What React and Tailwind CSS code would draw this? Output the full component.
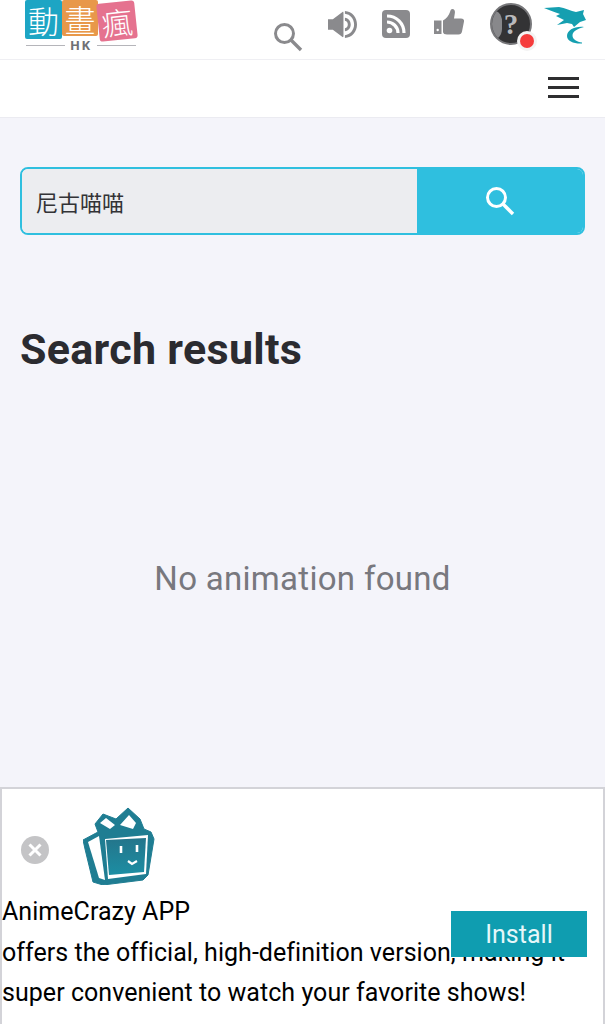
import React from 'react';

const Logo = () => (
  <div className="flex flex-col w-[112px] ml-[25px] h-[54px]">
    <div className="flex h-[39px] text-white leading-none" style={{ fontFamily: '"Noto Sans CJK TC", sans-serif' }}>
      <div className="w-[37px] h-[39px] bg-[#1da5c4] rounded-[2px] flex items-center justify-center text-[31px] font-light">動</div>
      <div className="w-[36px] h-[36px] bg-[#e8984a] rounded-[2px] flex items-center justify-center text-[31px] font-light">畫</div>
      <div className="w-[38px] h-[38px] mt-[2px] bg-[#e5728f] rounded-[3px] flex items-center justify-center text-[31px] font-light -rotate-6">瘋</div>
    </div>
    <div className="flex items-center gap-[5px] mt-[-1px] ml-[1px]">
      <div className="h-[1px] w-[39px] bg-[#b5b5ba]" />
      <span className="text-[13px] leading-[15px] font-bold tracking-[1.500px] text-[#6f7075]" style={{ fontFamily: '"Open Sans", sans-serif' }}>HK</span>
      <div className="h-[1px] w-[39px] bg-[#b5b5ba]" />
    </div>
  </div>
);

const SearchIcon = ({ className, color }) => (
  <svg viewBox="0 0 30 30" className={className} fill="none" stroke={color} strokeWidth="3">
    <circle cx="11.500" cy="11.500" r="9" />
    <path d="M18 18 L28 28" strokeWidth="3.400" />
  </svg>
);

const Speaker = () => (
  <svg viewBox="0 0 32 30" className="w-[31px] h-[29px]" fill="#8a8a8d">
    <path d="M1 9.500h5L16 2c.8-.4 1 .2 1 1v24c0 .8-.3 1.300-1 1L6 20.500H1z" />
    <path d="M18.500 1C26 1.500 31 7.500 31 15s-5 13.500-12.500 14v-3c5.500-.5 9.500-5.500 9.500-11S24 4.500 18.500 4z" />
    <path d="M18.500 8c3.800.5 6 3.500 6 7s-2.200 6.500-6 7v-3c2-.4 3-2 3-4s-1-3.600-3-4z" />
  </svg>
);

const Rss = () => (
  <svg viewBox="0 0 28 28" className="w-[28px] h-[28px]">
    <rect width="28" height="28" rx="4" fill="#8a8a8d" />
    <circle cx="7.500" cy="20.500" r="2.800" fill="#fff" />
    <path d="M5 12c6 0 11 5 11 11M5 6c9.500 0 17 7.500 17 17" fill="none" stroke="#fff" strokeWidth="3.200" />
  </svg>
);

const Thumb = () => (
  <svg viewBox="0 0 30 28" className="w-[30px] h-[28px]" fill="#8a8a8d">
    <path d="M0 11.500h7.500V25H0z" />
    <circle cx="3.700" cy="21" r="1.200" fill="#fff" />
    <path d="M9 11.500c3-1.500 6-5 7-8.500.5-2 1-3 2.500-3 2 0 2.800 2 2.300 4.500L20 9.500h7c2.500 0 3.300 1.500 3 3l-2 10c-.4 2-1.500 3-3.500 3H13c-2 0-4-.8-4-2.500z" />
  </svg>
);

const Avatar = () => (
  <div className="relative w-[42px] h-[42px]">
    <div className="w-[42px] h-[42px] rounded-full bg-[#333335] border-2 border-[#77777a] flex items-center justify-center overflow-hidden relative">
      <div className="absolute left-[-2px] top-[4px] w-[12px] h-[32px] bg-[#88888b] rounded-r-[12px]" />
      <span className="relative text-[#b9b9bc] font-bold text-[29px] leading-none" style={{ fontFamily: '"Liberation Serif", serif' }}>?</span>
    </div>
    <div className="absolute left-[27px] top-[28px] w-[20px] h-[20px] rounded-full bg-[#f3f3f3] flex items-center justify-center">
      <div className="w-[14px] h-[14px] rounded-full bg-[#f53c3c]" />
    </div>
  </div>
);

const Dragon = () => (
  <svg viewBox="0 0 42 37" className="w-[42px] h-[37px]" fill="#159fb0">
    <path d="M0 1 L15 0 C21 1 27 4 32 5 L40 3 L39 7 L42 13 L36 15 L30 20 L28 17 L23 16 L13 18 L20 13 L12 9 L16 7 C10 5 5 3 0 1z" />
    <path d="M40 20 C31 19 23 23 23 29 C23 34 30 37 38 36.500 L38 35.500 C33 35 28.500 32.500 28.500 28.500 C28.500 24.500 33 22 40 20z" />
  </svg>
);

const Gift = () => (
  <svg viewBox="0 0 72 78" className="w-[72px] h-[78px]">
    <defs>
      <linearGradient id="giftScreen" x1="0" y1="0" x2="0" y2="1">
        <stop offset="0" stopColor="#24758b" />
        <stop offset="1" stopColor="#1c8ea3" />
      </linearGradient>
    </defs>
    <path d="M0 33 L15 25 L12 17 L20 7 L33 12 L45 1 L57 12 L61 22 L68 25 L71 32 L65 68 L60 73 L20 78 L10 75 L2 42z" fill="#1f7d92" stroke="#1f7d92" strokeWidth="1" strokeLinejoin="round" />
    <path d="M17 16 L23 11 L32 18 L27 22z M37 18 L46 8 L53 16 L50 22z" fill="#fff" />
    <path d="M5 35 L16 29 L22 73 L16 71z" fill="#fff" />
    <path d="M22 32 L65 28 L63 67 L25 72z" fill="#fff" />
    <path d="M23 33 L63 31 L61 65 L26 68z" fill="url(#giftScreen)" />
    <path d="M38 39v7M54 38v7" stroke="#fff" strokeWidth="2.600" fill="none" />
    <path d="M45 54 L49 57 L54 54" stroke="#fff" strokeWidth="2.200" fill="none" />
  </svg>
);

const App = () => {
  return (
    <div className="relative w-[605px] h-[1024px] overflow-hidden bg-[#f4f4fa]" style={{ fontFamily: 'Roboto, sans-serif' }}>
      {/* top bar */}
      <header className="h-[60px] bg-white border-b border-[#efeff3] flex items-start overflow-hidden">
        <Logo />
        <div className="ml-[136px] mt-[22px]"><SearchIcon className="w-[30px] h-[30px]" color="#8a8a8d" /></div>
        <div className="ml-[24px] mt-[10px]"><Speaker /></div>
        <div className="ml-[24px] mt-[10px]"><Rss /></div>
        <div className="ml-[24px] mt-[9px]"><Thumb /></div>
        <div className="ml-[26px] mt-[3px]"><Avatar /></div>
        <div className="ml-[12px] mt-[7px]"><Dragon /></div>
      </header>

      <nav className="h-[58px] bg-white border-b border-[#ebebf1] flex items-center justify-end pr-[26px] pb-[3px]">
        <div className="flex flex-col gap-[6px] w-[31px]">
          <div className="h-[3px] bg-[#2e2e30]" />
          <div className="h-[3px] bg-[#2e2e30]" />
          <div className="h-[3px] bg-[#2e2e30]" />
        </div>
      </nav>

      <main className="px-[20px]">
        <div className="mt-[49px] h-[68px] flex rounded-[8px] border-2 border-[#2fbfdf] overflow-hidden">
          <div className="w-[395px] bg-[#ecedf0] flex items-center pl-[14px] text-[22px] text-[#333336]" style={{ fontFamily: '"Noto Sans CJK TC", sans-serif' }}>尼古喵喵</div>
          <div className="flex-1 bg-[#2fbfdf] flex items-center justify-center">
            <SearchIcon className="w-[30px] h-[30px]" color="#ffffff" />
          </div>
        </div>
        <h1 className="mt-[89px] text-[43px] leading-[50px] font-bold tracking-[0.300px] text-[#2b2b30]">Search results</h1>
        <p className="mt-[185px] text-center text-[33px] leading-[40px] tracking-[0.300px] text-[#78787e]">No animation found</p>
      </main>

      {/* install banner */}
      <aside className="absolute left-0 right-0 bottom-0 h-[237px] bg-white border-2 border-b-0 border-[#d3d3d8] text-black">
        <div className="flex items-center h-[106px] pt-[16px]">
          <div className="ml-[19px] w-[28px] h-[28px] rounded-full bg-[#c4c4c6] flex items-center justify-center">
            <svg viewBox="0 0 16 16" className="w-[16px] h-[16px]" stroke="#fff" strokeWidth="3" fill="none"><path d="M2.500 2.500l11 11M13.500 2.500l-11 11" /></svg>
          </div>
          <div className="ml-[34px] mt-[-8px]"><Gift /></div>
        </div>
        <p className="text-[25px] leading-[40.500px] tracking-[0.040px] -mt-[3px] whitespace-nowrap">
          AnimeCrazy APP<br />
          offers the official, high-definition version, making it<br />
          super convenient to watch your favorite shows!
        </p>
        <button className="absolute left-[449px] top-[122px] w-[136px] h-[46px] bg-[#0f9db0] text-[#e6f7f9] text-[25px] leading-[46px] text-center pt-[1px]">Install</button>
      </aside>
    </div>
  );
};

export default App;
